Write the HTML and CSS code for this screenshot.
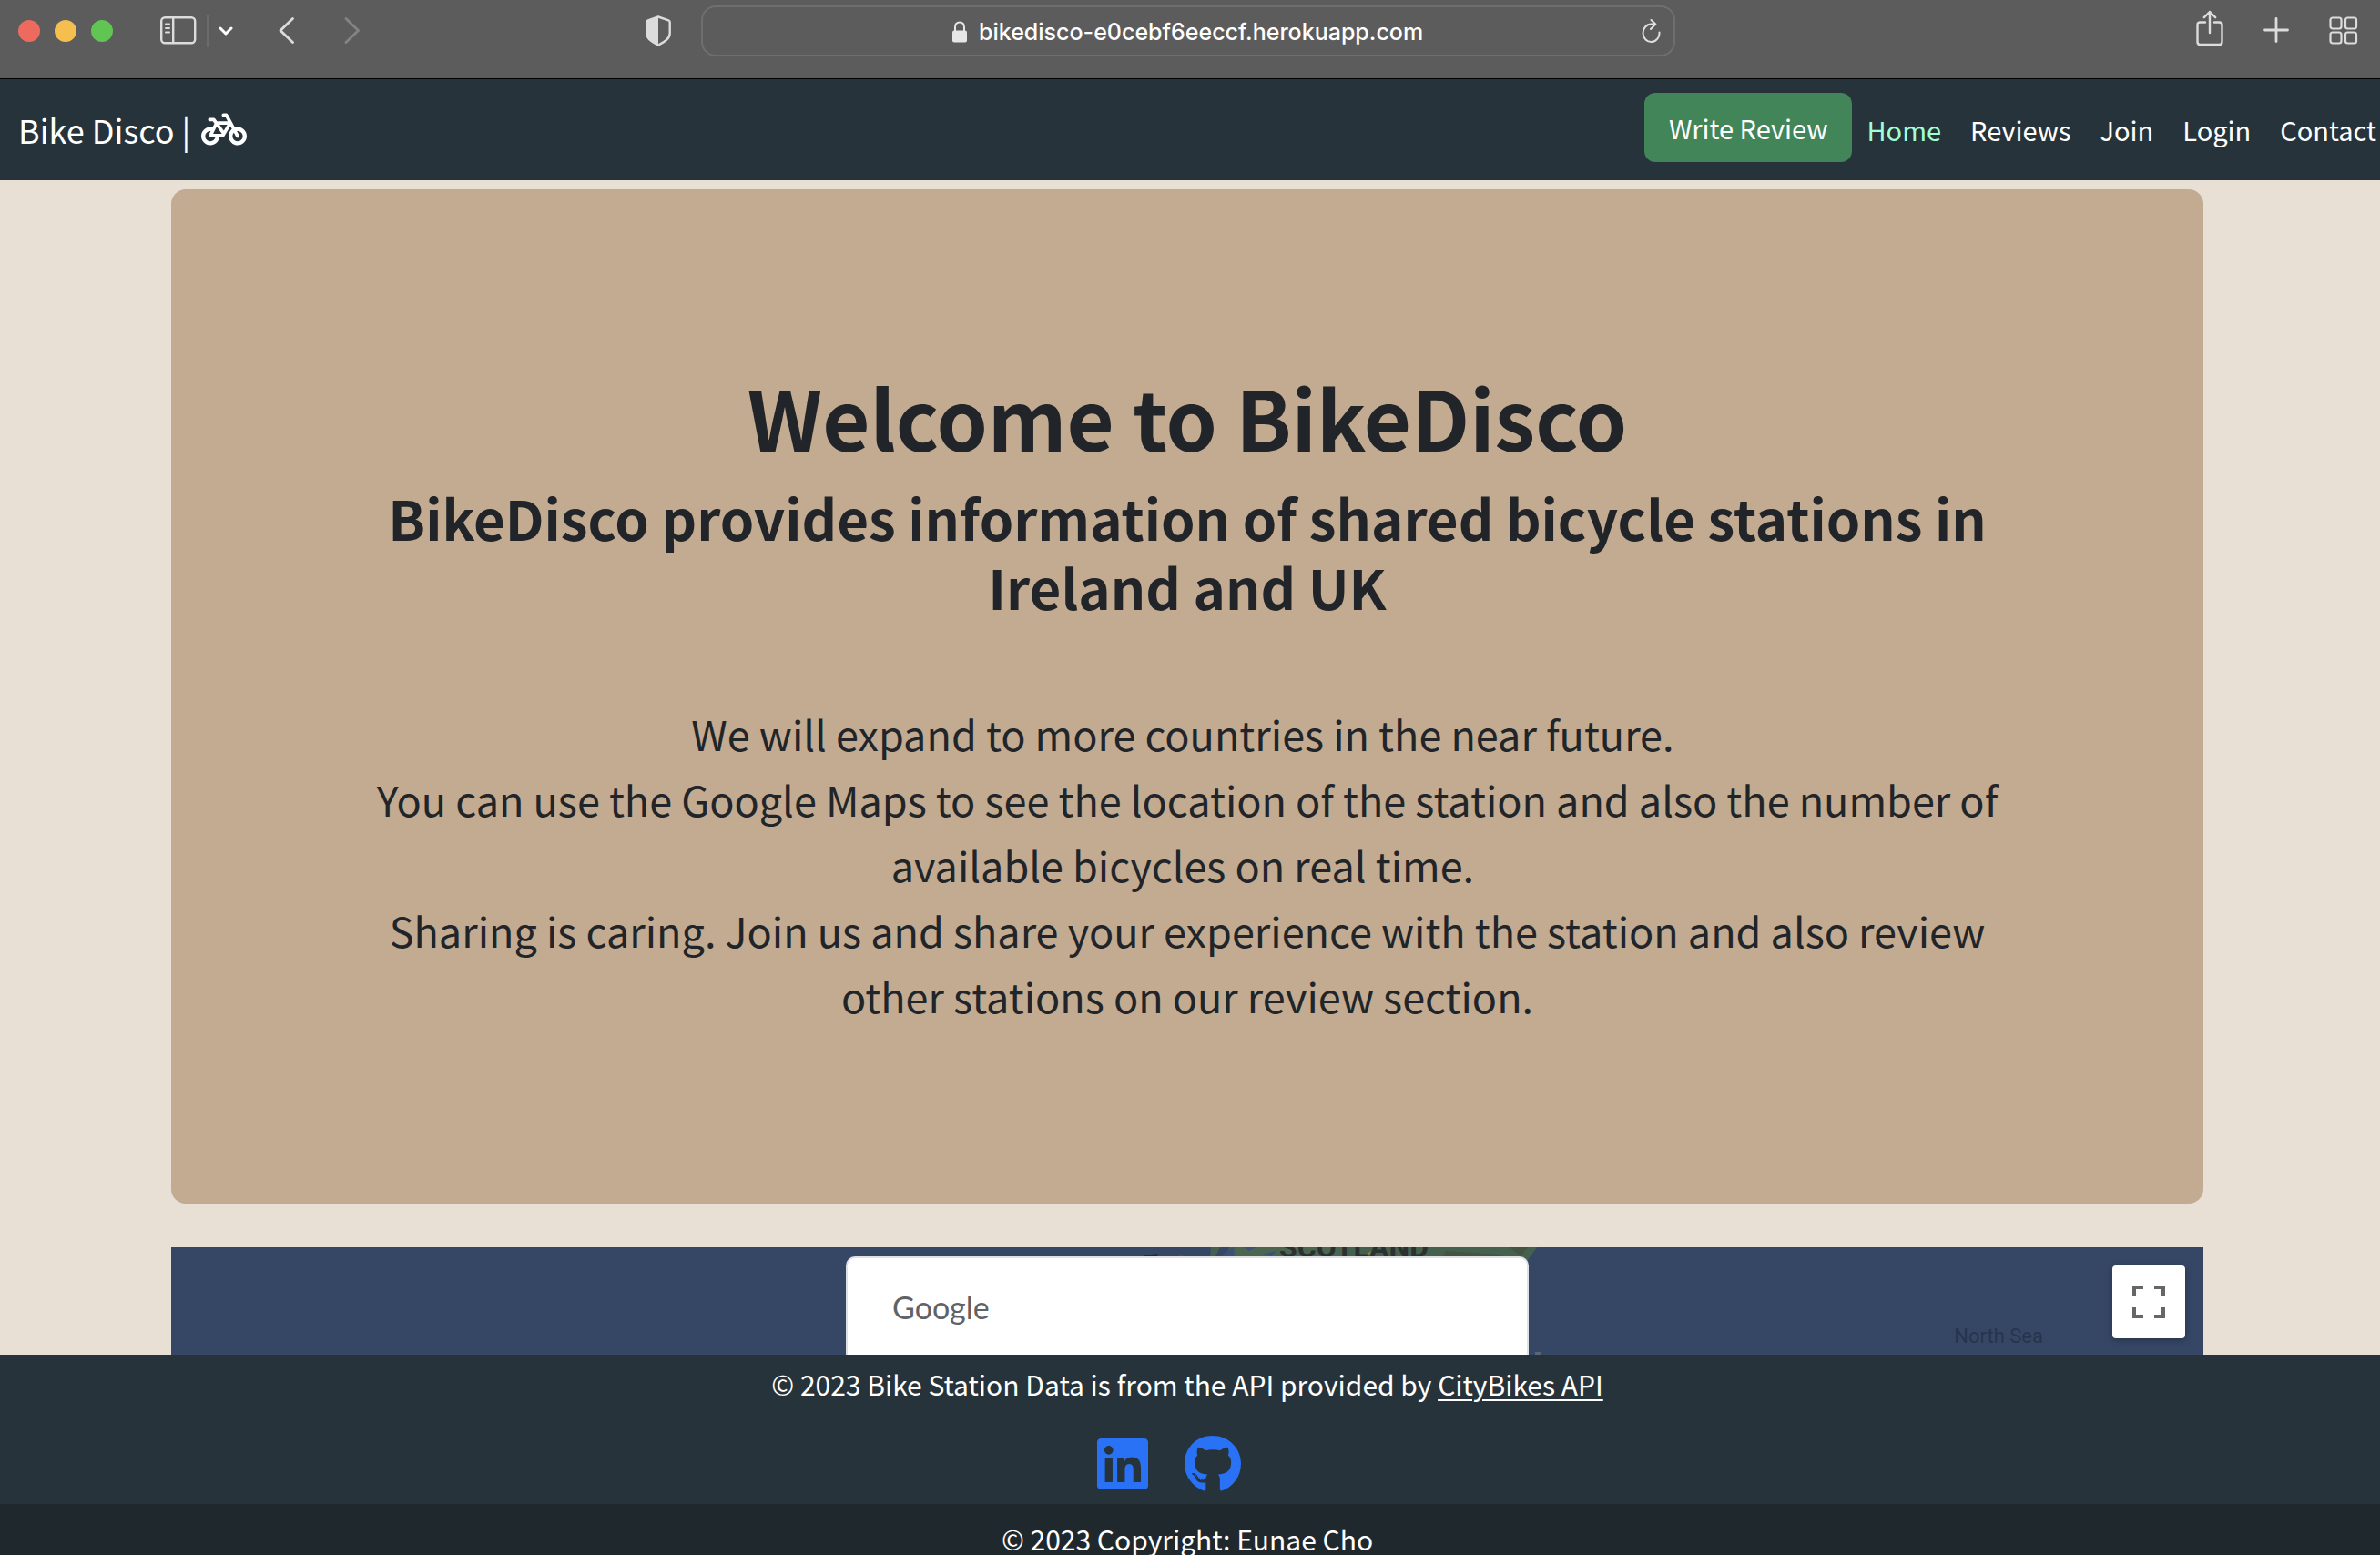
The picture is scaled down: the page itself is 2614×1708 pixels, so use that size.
FILE: index.html
```html
<!DOCTYPE html>
<html lang="en">
<head>
<meta charset="utf-8">
<meta name="viewport" content="width=device-width, initial-scale=1">
<title>Bike Disco</title>
<link rel="stylesheet" href="styles.css">
</head>
<body>
<div class="window">
  <div class="toolbar">
    <div class="toolbar-left">
      <div class="lights">
        <span class="light light-close"></span>
        <span class="light light-min"></span>
        <span class="light light-max"></span>
      </div>
      <div class="sidebar-tools">
        <button class="tool" type="button" aria-label="Sidebar">
          <svg width="40" height="32" viewBox="0 0 40 32" fill="none" stroke="#dcdcdc" stroke-width="2.4" stroke-linecap="round"><rect x="1.2" y="1.2" width="37" height="28" rx="4"/><path d="M14.2 1.5v27.5"/><path d="M6 8.5h4M6 13h4M6 17.5h4" stroke-width="2"/></svg>
        </button>
        <span class="divider"></span>
        <button class="tool" type="button" aria-label="Tab groups">
          <svg width="16" height="12" viewBox="0 0 16 12" fill="none" stroke="#fff" stroke-width="3" stroke-linecap="round" stroke-linejoin="round"><path d="M2 3l6 6 6-6"/></svg>
        </button>
      </div>
      <div class="history">
        <button class="tool" type="button" aria-label="Back">
          <svg width="18" height="30" viewBox="0 0 18 30" fill="none" stroke="#dcdcdc" stroke-width="2.8" stroke-linecap="round" stroke-linejoin="round"><path d="M15.5 1.500L2 14.500l13.500 13"/></svg>
        </button>
        <button class="tool" type="button" aria-label="Forward">
          <svg width="18" height="30" viewBox="0 0 18 30" fill="none" stroke="#848484" stroke-width="2.8" stroke-linecap="round" stroke-linejoin="round"><path d="M2 1.500l13.500 13L2 27.500"/></svg>
        </button>
      </div>
      <button class="tool shield" type="button" aria-label="Privacy report">
        <svg width="28" height="34" viewBox="0 0 28 34"><path d="M14 1.5L25.2 5.3c1 .4 1.5 1 1.5 2v12.200c0 6-5.500 9.500-12.700 13C6.800 29 1.300 25.500 1.300 19.500V7.300c0-1 .5-1.600 1.500-2z" fill="none" stroke="#dcdcdc" stroke-width="2.400" stroke-linejoin="round"/><path d="M14 1L2.500 5C1.200 5.500 .6 6.300.6 7.500v12C.6 26 6.500 29.500 14 33z" fill="#dcdcdc"/></svg>
      </button>
    </div>
    <div class="address">
      <svg class="lock" width="18" height="24" viewBox="0 0 18 24"><rect x="1" y="10.500" width="16" height="13" rx="2" fill="#e6e6e6"/><path d="M4 11V7c0-3.500 2-5.500 5-5.500S14 3.500 14 7v4" fill="none" stroke="#e6e6e6" stroke-width="2"/></svg>
      <input class="address-input" type="text" aria-label="Address" value="bikedisco-e0cebf6eeccf.herokuapp.com">
      <button class="tool reload" type="button" aria-label="Reload">
        <svg width="24" height="28" viewBox="0 0 24 28" fill="none" stroke="#e0e0e0" stroke-width="2" stroke-linecap="round" stroke-linejoin="round"><path d="M20.500 14.500A9 9.800 0 1 1 11.500 5.500H16M11.500 1l4.800 4.500-5.300 5.500"/></svg>
      </button>
    </div>
    <div class="toolbar-right">
      <button class="tool share" type="button" aria-label="Share">
        <svg width="30" height="40" viewBox="0 0 30 40" fill="none" stroke="#dcdcdc" stroke-width="2.400" stroke-linecap="round" stroke-linejoin="round"><path d="M10 13.500H4.500c-2 0-3 1-3 3V35c0 2 1 3 3 3h21c2 0 3-1 3-3V16.500c0-2-1-3-3-3H20M15 2v23M8.800 8.200L15 2l6.200 6.200"/></svg>
      </button>
      <button class="tool" type="button" aria-label="New tab">
        <svg width="28" height="30" viewBox="0 0 28 30" fill="none" stroke="#dcdcdc" stroke-width="2.800" stroke-linecap="round"><path d="M14 1.500v25M1.500 14h25"/></svg>
      </button>
      <button class="tool" type="button" aria-label="Tab overview">
        <svg width="32" height="32" viewBox="0 0 32 32" fill="none" stroke="#dcdcdc" stroke-width="2.200"><rect x="1.500" y="1.500" width="12" height="12" rx="2.500"/><rect x="18" y="1.500" width="12" height="12" rx="2.500"/><rect x="1.500" y="17.500" width="12" height="12" rx="2.500"/><rect x="18" y="17.500" width="12" height="12" rx="2.500"/></svg>
      </button>
    </div>
  </div>

  <header class="navbar">
    <a class="brand" href="#">Bike Disco |
      <svg width="50" height="40" viewBox="0 0 640 512" fill="#fff"><path d="M312 32c-13.300 0-24 10.700-24 24s10.700 24 24 24h25.700l34.600 64H222.900l-27.400-38C191 99.700 183.700 96 176 96H120c-13.300 0-24 10.700-24 24s10.700 24 24 24h43.700l22.100 30.700-26.600 53.100c-10-2.500-20.500-3.800-31.200-3.800C57.300 224 0 281.300 0 352s57.300 128 128 128c65.300 0 119.100-48.900 127-112h49c8.500 0 16.300-4.500 20.700-11.800l84.800-143.500 21.700 40.100C402.400 276.300 384 312 384 352c0 70.700 57.300 128 128 128s128-57.300 128-128s-57.300-128-128-128c-13.500 0-26.500 2.100-38.700 6L375.400 48.800C369.800 38.400 359 32 347.200 32H312zM458.600 303.700l32.300 59.700c6.300 11.700 20.900 16 32.500 9.700s16-20.900 9.700-32.500l-32.300-59.700c3.600-.6 7.400-.9 11.200-.9c39.800 0 72 32.200 72 72s-32.200 72-72 72s-72-32.200-72-72c0-18.600 7-35.500 18.600-48.300zM133.200 368h65c-7.300 32.100-36 56-70.200 56c-39.800 0-72-32.200-72-72s32.200-72 72-72c1.700 0 3.400 .1 5.100 .2l-24.200 48.500c-9 18.100 4.100 39.400 24.300 39.400zm33.700-48l50.700-101.300 72.900 101.200-.1 .1H166.800zm90.600-128H365.900L317 274.800 257.400 192z"/></svg>
    </a>
    <nav class="links">
      <button class="write" type="button">Write Review</button>
      <a class="link link-active" href="#">Home</a>
      <a class="link" href="#">Reviews</a>
      <a class="link" href="#">Join</a>
      <a class="link" href="#">Login</a>
      <a class="link" href="#">Contact</a>
    </nav>
  </header>

  <main class="content">
    <section class="hero">
      <h1 class="hero-title">Welcome to BikeDisco</h1>
      <h2 class="hero-subtitle">BikeDisco provides information of shared bicycle stations in Ireland and UK</h2>
      <p class="hero-text">We will expand to more countries in the near future.&nbsp;<br>You can use the Google Maps to see the location of the station and also the number of available bicycles on real time.&nbsp;<br>Sharing is caring. Join us and share your experience with the station and also review other stations on our review section.</p>
    </section>

    <section class="map" aria-label="Map">
      <svg class="map-land" viewBox="0 0 2232 118" width="100%">
        <path fill="#46604f" d="M1142 0H1500L1490 14 1482 24H1140z"/>
        <path fill="#4b6551" d="M1168 0H1290V24H1170z"/>
        <path fill="#435443" d="M1400 4l60 4 20 16h-90zM1470 0h20l-8 10z"/>
        <path fill="#364766" d="M1152 0h10l-4 12-14 4z"/>
        <path fill="#3a5277" d="M1150 12l16-12 2 8-12 10zM1178 0h14l-8 4zM1198 8l16-4-6 6z"/>
        <path fill="#435443" d="M1107 7l8 4h-9z"/>
        <path fill="#1f2a3d" d="M1068 9l16-2-2 5-12 1z"/>
        <path fill="#9a7a3c" d="M1310 9l8-5-2 5z"/>
        <path fill="#5a6578" d="M1498 115h6v3h-6z"/>
      </svg>
      <span class="map-label label-scotland">SCOTLAND</span>
      <span class="map-label label-sea">North Sea</span>
      <input class="map-search" type="search" placeholder="Google" aria-label="Search stations">
      <button class="fullscreen" type="button" aria-label="Toggle fullscreen view">
        <svg width="36" height="36" viewBox="0 0 18 18" fill="#666"><path d="M0 0v6h2V2h4V0H0zm16 0h-4v2h4v4h2V0h-2zm0 16h-4v2h6v-6h-2v4zM2 12H0v6h6v-2H2v-4z"/></svg>
      </button>
    </section>
  </main>

  <footer class="footer">
    <p class="credit">© 2023 Bike Station Data is from the API provided by <a class="credit-link" href="#">CityBikes API</a></p>
    <ul class="social">
      <li class="social-item"><a class="social-link" href="#" aria-label="LinkedIn"><svg width="56" height="64" viewBox="0 0 448 512" fill="#2a72f5"><path d="M416 32H31.900C14.300 32 0 46.500 0 64.300v383.400C0 465.500 14.300 480 31.900 480H416c17.600 0 32-14.500 32-32.300V64.300c0-17.800-14.400-32.300-32-32.300zM135.400 416H69V202.200h66.500V416zm-33.200-243c-21.300 0-38.500-17.300-38.500-38.500S80.900 96 102.200 96c21.200 0 38.500 17.300 38.500 38.500 0 21.300-17.200 38.500-38.500 38.500zm282.100 243h-66.400V312c0-24.800-.5-56.700-34.500-56.700-34.600 0-39.900 27-39.900 54.900V416h-66.400V202.200h63.700v29.200h.9c8.900-16.800 30.600-34.500 62.900-34.500 67.200 0 79.700 44.300 79.700 101.900V416z"/></svg></a></li>
      <li class="social-item"><a class="social-link" href="#" aria-label="GitHub"><svg width="62" height="64" viewBox="0 0 496 512" fill="#2a72f5"><path d="M165.900 397.400c0 2-2.300 3.600-5.200 3.600-3.300.3-5.600-1.300-5.600-3.600 0-2 2.300-3.600 5.200-3.600 3-.3 5.600 1.300 5.600 3.600zm-31.100-4.500c-.7 2 1.300 4.300 4.300 4.900 2.600 1 5.600 0 6.200-2s-1.300-4.300-4.300-5.200c-2.600-.7-5.500.3-6.200 2.300zm44.200-1.700c-2.900.7-4.900 2.600-4.600 4.900.3 2 2.900 3.300 5.900 2.600 2.900-.7 4.900-2.600 4.600-4.600-.3-1.900-3-3.200-5.900-2.900zM244.800 8C106.100 8 0 113.300 0 252c0 110.900 69.800 205.800 169.500 239.200 12.800 2.300 17.300-5.600 17.300-12.100 0-6.200-.3-40.400-.3-61.400 0 0-70 15-84.700-29.800 0 0-11.400-29.100-27.800-36.600 0 0-22.900-15.700 1.600-15.400 0 0 24.900 2 38.600 25.800 21.900 38.600 58.600 27.500 72.900 20.900 2.300-16 8.800-27.100 16-33.700-55.900-6.200-112.300-14.300-112.300-110.500 0-27.500 7.600-41.300 23.600-58.900-2.600-6.500-11.100-33.300 2.600-67.900 20.900-6.500 69 27 69 27 20-5.600 41.500-8.500 62.800-8.500s42.800 2.900 62.800 8.500c0 0 48.100-33.600 69-27 13.700 34.700 5.200 61.400 2.600 67.900 16 17.700 25.800 31.500 25.800 58.900 0 96.500-58.900 104.200-114.800 110.500 9.200 7.900 17 22.900 17 46.400 0 33.700-.3 75.400-.3 83.600 0 6.500 4.600 14.400 17.300 12.100C428.200 457.800 496 362.900 496 252 496 113.300 383.500 8 244.800 8zM97.200 352.900c-1.300 1-1 3.300.7 5.200 1.600 1.600 3.900 2.300 5.200 1 1.300-1 1-3.300-.7-5.200-1.600-1.600-3.900-2.300-5.200-1zm-10.800-8.100c-.7 1.300.3 2.900 2.300 3.900 1.600 1 3.600.7 4.300-.7.7-1.300-.3-2.900-2.300-3.900-2-.6-3.600-.3-4.300.7zm32.400 35.600c-1.600 1.300-1 4.300 1.300 6.200 2.300 2.300 5.200 2.600 6.500 1 1.300-1.300.7-4.300-1.300-6.200-2.200-2.300-5.200-2.600-6.500-1zm-11.400-14.700c-1.600 1-1.600 3.600 0 5.900 1.600 2.300 4.300 3.300 5.600 2.300 1.600-1.300 1.600-3.900 0-6.200-1.400-2.300-4-3.300-5.600-2z"/></svg></a></li>
    </ul>
    <p class="copyright">© 2023 Copyright: Eunae Cho</p>
  </footer>
</div>
</body>
</html>
```
FILE: styles.css
```css
* {
  box-sizing: border-box;
}

body {
  margin: 0;
  background: #e8dfd5;
  color: #212529;
  font-family: "Noto Sans CJK JP", "Noto Sans", sans-serif;
  font-size: 30px;
}

svg {
  display: block;
}

.window {
  display: flex;
  flex-direction: column;
  height: 100vh;
  overflow: hidden;
}

/* Browser toolbar */
.toolbar {
  display: grid;
  grid-template-columns: 1fr minmax(0, 1070px) 1fr;
  flex: none;
  padding: 6px 24px 24px 20px;
  background: #5c5c5c;
  border-bottom: 1px solid #000;
}

.toolbar-left,
.toolbar-right,
.lights,
.sidebar-tools,
.history {
  display: flex;
  align-items: center;
}

.lights {
  gap: 16px;
}

.light {
  width: 24px;
  height: 24px;
  border-radius: 50%;
}

.light-close {
  background: #ed6a5e;
}

.light-min {
  background: #f5bf4f;
}

.light-max {
  background: #61c554;
}

.sidebar-tools {
  gap: 11px;
  margin-left: 52px;
}

.divider {
  width: 2px;
  height: 36px;
  background: #6b6b6b;
}

.history {
  gap: 54px;
  margin-left: 50px;
}

.tool {
  padding: 0;
  border: 0;
  background: none;
}

.shield {
  margin: 0 33px 0 auto;
}

.address {
  display: flex;
  align-items: center;
  justify-content: center;
  height: 56px;
  padding: 2px 12px 0 38px;
  border: 2px solid #6f6f71;
  border-radius: 16px;
}

.lock {
  margin: 0 12px 0 auto;
}

.address-input {
  width: 492px;
  padding: 0;
  border: 0;
  outline: 0;
  background: none;
  color: #fff;
  font: 500 25px/32px Inter, sans-serif;
}

.reload {
  margin-left: auto;
}

.toolbar-right {
  justify-content: flex-end;
  gap: 44px;
}

.share {
  margin-bottom: 6px;
}

/* Site header */
.navbar {
  display: flex;
  flex: none;
  align-items: center;
  justify-content: space-between;
  min-height: 111px;
  padding: 15px 4px 16px 20px;
  background: #26333a;
}

.brand {
  display: flex;
  align-items: center;
  gap: 12px;
  color: #fff;
  font-size: 36px;
  line-height: 48px;
  text-decoration: none;
}

.links {
  display: flex;
  align-items: center;
  gap: 32px;
  height: 80px;
  font-size: 29px;
}

.write {
  align-self: flex-start;
  height: 76px;
  margin-right: -16px;
  padding: 0 27px;
  border: 0;
  border-radius: 12px;
  background: #428559;
  color: #fff;
  font-family: inherit;
  font-size: 29px;
}

.link {
  color: #fff;
  text-decoration: none;
}

.link-active {
  color: #9effd6;
}

/* Content */
.content {
  display: flex;
  flex: 1;
  flex-direction: column;
  gap: 48px;
  min-height: 0;
  padding: 10px 194px 0 188px;
}

.hero {
  flex: none;
  padding: 192px 204px;
  border-radius: 16px;
  background: #c3ab91;
  text-align: center;
}

.hero-title {
  margin: 0 0 16px;
  font-size: 90px;
  line-height: 114px;
}

.hero-subtitle {
  margin: 0 0 88px;
  font-size: 60px;
  line-height: 76px;
}

.hero-text {
  margin: 0;
  font-size: 45px;
  line-height: 72px;
}

.map {
  position: relative;
  display: flex;
  flex: 1;
  justify-content: center;
  min-height: 0;
  overflow: hidden;
  background: #364766;
}

.map-land {
  position: absolute;
  top: 0;
  left: 0;
}

.map-label {
  position: absolute;
  font-family: Roboto, sans-serif;
}

.label-scotland {
  top: -18px;
  left: 1217px;
  color: #2a312f;
  font-size: 32px;
  font-weight: 700;
  line-height: 36px;
}

.label-sea {
  right: 176px;
  bottom: 6px;
  color: #26354c;
  font-size: 22px;
  line-height: 28px;
}

.map-search {
  position: relative;
  flex: none;
  width: 750px;
  height: 108px;
  margin-top: 10px;
  padding: 0 49px;
  border: 2px solid #dfe1e5;
  border-bottom: 0;
  border-radius: 10px 10px 0 0;
  outline: 0;
  background: #fff;
  font-family: Lato, sans-serif;
  font-size: 34px;
}

.map-search::placeholder {
  color: #5f6368;
}

.fullscreen {
  position: absolute;
  top: 20px;
  right: 20px;
  display: grid;
  place-items: center;
  width: 80px;
  height: 80px;
  padding: 0;
  border: 0;
  border-radius: 4px;
  background: #fff;
  box-shadow: 0 2px 8px rgb(0 0 0 / 30%);
}

/* Footer */
.footer {
  flex: none;
  background: #26333a;
  color: #fff;
  text-align: center;
}

.credit {
  margin: 0;
  padding: 8px 6px 0 0;
  line-height: 48px;
}

.credit-link {
  color: #fff;
  text-decoration-thickness: 2px;
  text-underline-offset: 4px;
}

.social {
  display: flex;
  justify-content: center;
  margin: 32px 0 12px;
  padding: 0 6px 0 0;
  list-style: none;
}

.social-item {
  margin-right: 40px;
}

.copyright {
  margin: 0;
  padding: 20px 6px 0 0;
  background: #1f292d;
  line-height: 36px;
}
```
